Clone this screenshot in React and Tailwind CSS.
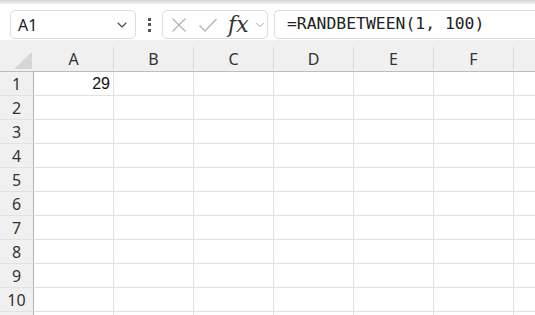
import { ChevronDown } from "lucide-react";

const COLS = ["A", "B", "C", "D", "E", "F", "G"];
const ROWS = [1, 2, 3, 4, 5, 6, 7, 8, 9, 10, 11];

const ui = { fontFamily: '"Noto Sans", "Open Sans", sans-serif' };
const cellFont = { fontFamily: '"Liberation Sans", Arial, sans-serif' };
const mono = { fontFamily: '"DejaVu Sans Mono", "Liberation Mono", monospace' };

function Toolbar() {
  return (
    <div className="flex h-[36px] items-start bg-white pl-[10px] pt-[6px]" style={ui}>
      <div className="flex h-[29px] w-[126px] shrink-0 items-center justify-between rounded-[5px] border border-[#dcdcdc] bg-white pl-[7px] pr-[5px]">
        <span className="text-[16px] leading-none text-[#222]">A1</span>
        <ChevronDown size={16} strokeWidth={1.6} className="text-[#444]" />
      </div>
      <div className="flex h-[29px] w-[26px] shrink-0 flex-col items-center justify-center gap-[2.5px]">
        <span className="h-[3px] w-[3px] bg-[#555]" />
        <span className="h-[3px] w-[3px] bg-[#555]" />
        <span className="h-[3px] w-[3px] bg-[#555]" />
      </div>
      <div className="flex h-[29px] w-[106px] shrink-0 items-center rounded-[5px] border border-[#dcdcdc] bg-white pl-[8px]">
        <svg width="16" height="16" viewBox="0 0 16 16" className="shrink-0">
          <path d="M1.5 1.5 L14.5 14.5 M14.5 1.5 L1.5 14.5" stroke="#b4b4b4" strokeWidth="1.3" fill="none" />
        </svg>
        <svg width="20" height="16" viewBox="0 0 20 16" className="ml-[11px] shrink-0">
          <path d="M1.5 8.5 L7 14 L18.5 2" stroke="#b4b4b4" strokeWidth="1.3" fill="none" />
        </svg>
        <span
          className="ml-[10px] text-[22px] italic leading-none text-[#333]"
          style={{ fontFamily: '"DejaVu Serif", "Liberation Serif", serif' }}
        >
          fx
        </span>
        <ChevronDown size={14} strokeWidth={1.5} className="ml-[4px] text-[#9a9a9a]" />
      </div>
      <div className="ml-[6px] flex h-[29px] flex-1 items-center rounded-l-[5px] border border-r-0 border-[#dcdcdc] bg-white pl-[12px]">
        <span className="text-[16.4px] leading-none text-[#222]" style={mono}>
          =RANDBETWEEN(1, 100)
        </span>
      </div>
    </div>
  );
}

function Grid() {
  return (
    <div className="bg-white" style={ui}>
      <div className="flex h-[32px] border-b border-[#bdbdbd] bg-[#f0f0f0]">
        <div className="relative w-[34px] shrink-0">
          <svg width="18" height="17" viewBox="0 0 18 17" className="absolute bottom-[2px] right-[2px]">
            <path d="M18 0 L18 17 L0 17 Z" fill="#d6d6d6" />
          </svg>
        </div>
        {COLS.map((c) => (
          <div key={c} className="flex w-[80px] shrink-0 flex-col">
            <div className="h-[10px]" />
            <div className="flex flex-1 items-center justify-center border-r border-[#d9d9d9] text-[16px] text-[#333]">
              {c === "G" ? "" : c}
            </div>
          </div>
        ))}
      </div>
      {ROWS.map((r) => (
        <div key={r} className="flex h-[24px]">
          <div className="flex w-[34px] shrink-0 items-center justify-center border-b border-r border-[#e2e2e2] border-r-[#b4b4b4] bg-[#f0f0f0] text-[16px] leading-none text-[#333]">
            {r < 11 ? r : ""}
          </div>
          {COLS.map((c) => (
            <div
              key={c}
              className="flex w-[80px] shrink-0 items-center justify-end border-b border-r border-[#e1e1e1] pr-[3px] text-[16px] leading-none text-[#111]"
              style={cellFont}
            >
              {r === 1 && c === "A" ? "29" : ""}
            </div>
          ))}
        </div>
      ))}
    </div>
  );
}

export default function App() {
  return (
    <div className="h-[315px] w-[535px] overflow-hidden bg-white">
      <div className="h-[4px] bg-gradient-to-b from-[#d4d4d4] to-[#f2f2f2]" />
      <Toolbar />
      <Grid />
    </div>
  );
}
